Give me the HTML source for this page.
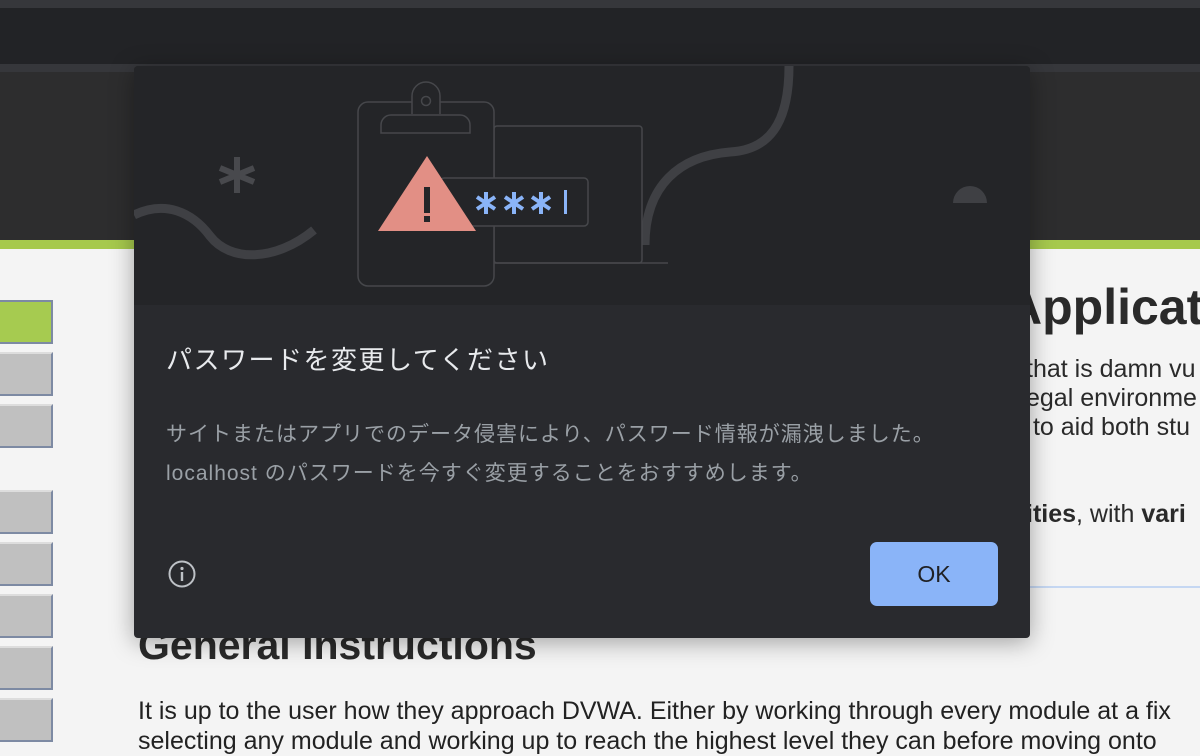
<!DOCTYPE html>
<html><head><meta charset="utf-8"><style>
*{margin:0;padding:0;box-sizing:border-box}
body{width:1200px;height:738px;overflow:hidden;position:relative;background:#f4f4f4;font-family:"Liberation Sans","Noto Sans CJK JP",sans-serif}
.a{position:absolute}
.btn{position:absolute;left:-2px;width:55px;height:44px;background:#c0c0c0;border:2px solid #7d8aa3;border-top-color:#ddd}
</style></head><body>
<div class="a" style="left:0;top:0;width:1200px;height:8px;background:#36373b"></div>
<div class="a" style="left:0;top:8px;width:1200px;height:56px;background:#222326"></div>
<div class="a" style="left:0;top:64px;width:1200px;height:8px;background:#36373b"></div>
<div class="a" style="left:0;top:72px;width:1200px;height:168px;background:#2d2d2e"></div>
<div class="a" style="left:0;top:240px;width:1200px;height:9px;background:#a6c94d"></div>
<div class="btn" style="top:300px;background:#a6cb50;border-color:#7d8aa3"></div>
<div class="btn" style="top:352px"></div>
<div class="btn" style="top:404px"></div>
<div class="btn" style="top:490px"></div>
<div class="btn" style="top:542px"></div>
<div class="btn" style="top:594px"></div>
<div class="btn" style="top:646px"></div>
<div class="btn" style="top:698px"></div>
<div class="a" style="left:1006px;top:278px;font-size:50px;font-weight:bold;color:#2a2a2a;white-space:nowrap">Applicat</div>
<div class="a" style="left:1026px;top:355px;font-size:25px;line-height:29px;color:#2a2a2a;white-space:nowrap">that is damn vu<br>egal environme<br>&nbsp;to aid both stu</div>
<div class="a" style="left:1026px;top:500px;font-size:25px;color:#2a2a2a;white-space:nowrap"><b>ities</b>, with <b>vari</b></div>
<div class="a" style="left:1030px;top:586px;width:170px;height:2px;background:#c5d7f2"></div>
<div class="a" style="left:138px;top:622px;font-size:41px;font-weight:bold;color:#2a2a2a;white-space:nowrap">General Instructions</div>
<div class="a" style="left:138px;top:696px;font-size:25px;line-height:30px;color:#222;white-space:nowrap">It is up to the user how they approach DVWA. Either by working through every module at a fix<br>selecting any module and working up to reach the highest level they can before moving onto</div>
<div class="a" style="left:134px;top:66px;width:896px;height:572px;background:#292a2e;border-radius:4px;box-shadow:0 4px 24px rgba(0,0,0,.35);overflow:hidden">
<svg width="896" height="239" viewBox="134 66 896 239" style="display:block;background:#242528">
<g fill="none" stroke="#3f4044" stroke-width="9" stroke-linecap="butt">
<path d="M134,215 C165,200 192,212 210,236 C230,262 275,262 314,230"/>
<path d="M789,66 C789,125 768,150 730,152 C680,156 645,185 645,245"/>
</g>
<g stroke="#48494d" stroke-width="6" fill="none"><path d="M237,157V193M220,168L254,182M254,168L220,182"/></g>
<g fill="#242528" stroke="#46474b" stroke-width="1.5">
<rect x="494" y="126" width="148" height="137" rx="3"/>
<line x1="494" y1="263" x2="668" y2="263"/>
<rect x="358" y="102" width="136" height="184" rx="10"/>
<path d="M412,114 V96 A14,14 0 0 1 440,96 V114"/>
<circle cx="426" cy="101" r="4.5"/>
<path d="M381,133 V125 A10,10 0 0 1 391,115 H460 A10,10 0 0 1 470,125 V133 Z"/>
<rect x="440" y="178" width="148" height="48" rx="4"/>
</g>
<path d="M427,156 L476,231 L378,231 Z" fill="#e28f85"/>
<rect x="424" y="187" width="6" height="26" fill="#242528"/>
<rect x="424" y="216" width="6" height="6" fill="#242528"/>
<g stroke="#8ab4f8" stroke-width="4" fill="none">
<path d="M486,192V214M477,197L495,209M495,197L477,209"/>
<path d="M514,192V214M505,197L523,209M523,197L505,209"/>
<path d="M541,192V214M532,197L550,209M550,197L532,209"/>
</g>
<rect x="564" y="190" width="3" height="24" fill="#8ab4f8"/>
<path d="M953,203 A17,17 0 0 1 987,203 Z" fill="#3f4044"/>
</svg>
<div class="a" style="left:32px;top:274px;font-size:26px;letter-spacing:1.5px;color:#e8eaed;white-space:nowrap">パスワードを変更してください</div>
<div class="a" style="left:32px;top:349px;font-size:21px;letter-spacing:1px;line-height:39px;color:#9aa0a6;white-space:nowrap">サイトまたはアプリでのデータ侵害により、パスワード情報が漏洩しました。<br>localhost のパスワードを今すぐ変更することをおすすめします。</div>
<svg class="a" style="left:34px;top:494px" width="28" height="28" viewBox="0 0 28 28"><circle cx="14" cy="14" r="12.5" fill="none" stroke="#bdc1c6" stroke-width="2"/><rect x="12.8" y="12" width="2.4" height="9" fill="#bdc1c6"/><circle cx="14" cy="8.5" r="1.6" fill="#bdc1c6"/></svg>
<div class="a" style="left:736px;top:476px;width:128px;height:64px;background:#8ab4f8;border-radius:7px;color:#202124;font-size:23px;line-height:64px;text-align:center">OK</div>
</div>
</body></html>
